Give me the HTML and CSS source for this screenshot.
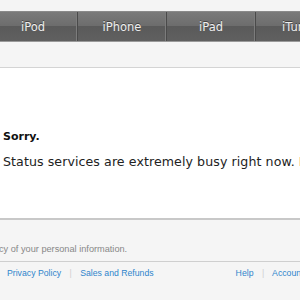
FILE: index.html
```html
<!DOCTYPE html>
<html lang="en">
<head>
    <meta charset="UTF-8">
    <meta name="viewport" content="width=device-width, initial-scale=1.0">
    <title>Store Status</title>
    <link rel="stylesheet" href="styles.css">
</head>
<body>
    <div class="page">
        <nav class="globalnav">
            <a class="nav-item" href="#">iPod</a>
            <a class="nav-item" href="#">iPhone</a>
            <a class="nav-item" href="#">iPad</a>
            <a class="nav-item" href="#">iTunes</a>
        </nav>

        <div class="subheader"></div>

        <div class="content">
            <h2 class="title">Sorry.</h2>
            <p class="message">Status services are extremely busy right now. If you need help, please try again later.</p>
        </div>

        <div class="footer">
            <p class="footer-note">cy of your personal information.</p>
            <div class="footer-links">
                <div class="links-left">
                    <a href="#">Privacy Policy</a>
                    <span class="sep">|</span>
                    <a href="#">Sales and Refunds</a>
                </div>
                <div class="links-right">
                    <a href="#">Help</a>
                    <span class="sep">|</span>
                    <a href="#">Account</a>
                </div>
            </div>
        </div>
    </div>
</body>
</html>
```

FILE: styles.css
```css
body {
    font-family: "DejaVu Sans", "Lucida Grande", sans-serif;
    background-color: #f4f4f4;
    margin: 0;
    overflow: hidden;
}

.page {
    padding-top: 11px;
    width: 300px;
    height: 300px;
    overflow: hidden;
}

.globalnav {
    display: flex;
    margin-left: -11px;
    height: 31px;
    background: linear-gradient(#7a7a7a, #6c6c6c 50%, #5a5a5a 50%, #606060);
    border-top: 1px solid #8a8a8a;
    border-bottom: 1px solid #9a9a9a;
    box-sizing: border-box;
}

.nav-item {
    flex: 0 0 88px;
    display: flex;
    justify-content: center;
    align-items: center;
    color: #eeeeee;
    font-size: 11.5px;
    text-decoration: none;
    text-shadow: 0 -1px 0 #444;
    border-right: 1px solid #4a4a4a;
    box-shadow: inset -2px 0 0 -1px #7c7c7c;
    white-space: nowrap;
}

.subheader {
    height: 25px;
    background-color: #f5f5f5;
    border-bottom: 1px solid #d4d4d4;
}

.content {
    background-color: #ffffff;
    height: 150px;
    padding: 61px 0 0 3px;
    box-sizing: border-box;
}

.title {
    margin: 0;
    font-size: 11px;
    font-weight: bold;
    color: #111;
    line-height: 16px;
}

.message {
    margin: 9px 0 0;
    font-size: 12.6px;
    letter-spacing: 0.08px;
    color: #222;
    line-height: 16px;
    white-space: nowrap;
}

.footer {
    border-top: 2px solid #c8c8c8;
    background-color: #f5f5f5;
    height: 100px;
}

.footer-note {
    margin: 0 0 0 -1px;
    padding: 23px 0 6px;
    font-family: "Liberation Sans", Arial, sans-serif;
    font-size: 9.2px;
    color: #888;
    border-bottom: 1px solid #cfcfcf;
    line-height: 12px;
    white-space: nowrap;
}

.footer-links {
    display: flex;
    padding: 5px 0 0 7px;
    font-family: "Liberation Sans", Arial, sans-serif;
    font-size: 8.7px;
    line-height: 12px;
    white-space: nowrap;
}

.footer-links a {
    color: #2f85cc;
    text-decoration: none;
}

.links-right {
    margin-left: 82px;
}

.sep {
    color: #d0d0d0;
    margin: 0 6px;
}
```
